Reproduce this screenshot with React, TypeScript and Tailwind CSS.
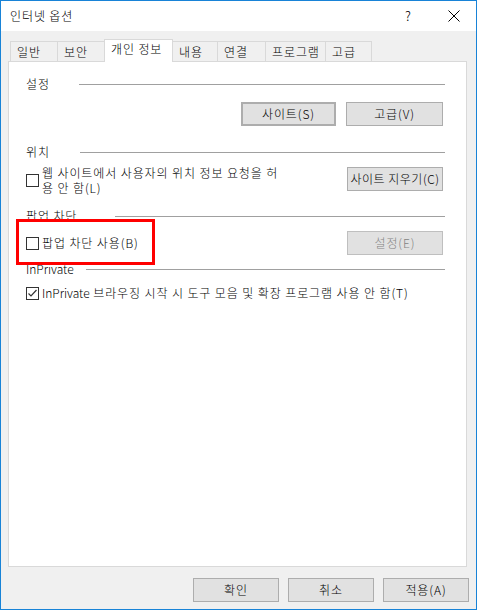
import React from 'react';

const tabs = [
  { label: '일반', w: 'w-[48px]' },
  { label: '보안', w: 'w-[48px]' },
  { label: '개인 정보', w: 'w-[69px]', active: true },
  { label: '내용', w: 'w-[46px]' },
  { label: '연결', w: 'w-[49px]' },
  { label: '프로그램', w: 'w-[61px]' },
  { label: '고급', w: 'w-[47px]' },
];

const GroupHeader: React.FC<{ label: React.ReactNode; labelW: string; className?: string }> = ({ label, labelW, className }) => (
  <div className={`flex items-center h-[14px] ${className ?? ''}`}>
    <span className={`${labelW} shrink-0 whitespace-nowrap`}>{label}</span>
    <div className="flex-1 h-px bg-[#a0a0a0]" />
  </div>
);

const CheckBox: React.FC<{ checked?: boolean; className?: string }> = ({ checked, className }) => (
  <div className={`w-[13px] h-[13px] border border-[#333333] bg-white shrink-0 flex items-center justify-center ${className ?? ''}`}>
    {checked && (
      <svg width="11" height="11" viewBox="0 0 11 11">
        <polyline points="1.5,5.5 4,8 9.5,2" fill="none" stroke="#333333" strokeWidth="1.2" />
      </svg>
    )}
  </div>
);

const Btn: React.FC<{ children: React.ReactNode; className?: string }> = ({ children, className }) => (
  <div className={`h-[24px] flex items-center justify-center border border-[#adadad] bg-[#e1e1e1] whitespace-nowrap ${className ?? ''}`}>
    {children}
  </div>
);

export default function App() {
  return (
    <div className="w-[477px] h-[610px] border border-[#1883d7] bg-[#f0f0f0] flex flex-col text-[12px] leading-[14px] tracking-[0.9px] font-light text-black [font-family:'Noto_Sans_CJK_KR','Noto_Sans',sans-serif]">
      {/* title bar */}
      <div className="h-[30px] bg-white flex items-center pl-[9px] shrink-0">
        <span>인터넷 옵션</span>
        <span className="ml-auto w-[8px] text-[13px]">?</span>
        <svg className="ml-[35px] mr-[16px]" width="12" height="12" viewBox="0 0 12 12">
          <path d="M0.5 0.5 L11.5 11.5 M11.5 0.5 L0.5 11.5" stroke="#000" strokeWidth="1" />
        </svg>
      </div>

      <div className="flex-1 flex flex-col px-[7px] pt-[8px]">
        {/* tabs */}
        <div className="flex items-end h-[22px] pl-[2px]">
          {tabs.map((t, i) => (
            <div
              key={t.label}
              className={`${t.w} ${i > 0 ? '-ml-px' : ''} border border-b-0 border-[#d9d9d9] flex pl-[6px] whitespace-nowrap ${
                t.active
                  ? 'relative z-10 h-[23px] -mb-px bg-white items-start pt-[2px]'
                  : 'h-[20px] bg-[#f0f0f0] items-center'
              }`}
            >
              {t.label}
            </div>
          ))}
        </div>

        {/* panel */}
        <div className="relative w-[459px] h-[506px] border border-[#d9d9d9] bg-white pl-[17px] pr-[21px] pt-[15px] flex flex-col">
          <GroupHeader label="설정" labelW="w-[53px]" />
          <div className="flex justify-end gap-[10px] mt-[11px] mr-[2px]">
            <Btn className="w-[95px] border-2 border-[#0078d7]">사이트(S)</Btn>
            <Btn className="w-[97px]">고급(V)</Btn>
          </div>

          <GroupHeader label="위치" labelW="w-[54px]" className="mt-[19px]" />
          <div className="flex items-start mt-[6px] mr-[2px]">
            <CheckBox className="mt-[9px]" />
            <div className="ml-[3px] leading-[15px]">
              웹 사이트에서 사용자의 위치 정보 요청을 허<br />용 안 함(L)
            </div>
            <Btn className="ml-auto mt-[2px] w-[96px] tracking-[0.5px]">사이트 지우기(C)</Btn>
          </div>

          <GroupHeader label="팝업 차단" labelW="w-[89px]" className="mt-[14px]" />
          <div className="flex items-center mt-[8px] mr-[2px]">
            <CheckBox />
            <span className="ml-[3px]">팝업 차단 사용(B)</span>
            <Btn className="ml-auto w-[96px] bg-[#cccccc] border-[#bfbfbf] text-[#838383]">설정(E)</Btn>
          </div>

          <GroupHeader label={<span className="tracking-normal">InPrivate</span>} labelW="w-[60px]" className="mt-[7px]" />
          <div className="flex items-center mt-[10px]">
            <CheckBox checked />
            <span className="ml-[3px] whitespace-nowrap">
              <span className="tracking-normal">InPrivate</span> 브라우징 시작 시 도구 모음 및 확장 프로그램 사용 안 함(T)
            </span>
          </div>

          {/* annotation */}
          <div className="absolute left-[7px] top-[157px] w-[139px] h-[46px] border-[3px] border-[#ff0000]" />
        </div>

        {/* dialog buttons */}
        <div className="flex justify-end gap-[9px] mt-[11px]">
          <Btn className="w-[86px]">확인</Btn>
          <Btn className="w-[86px]">취소</Btn>
          <Btn className="w-[86px]">적용(A)</Btn>
        </div>
      </div>
    </div>
  );
}
